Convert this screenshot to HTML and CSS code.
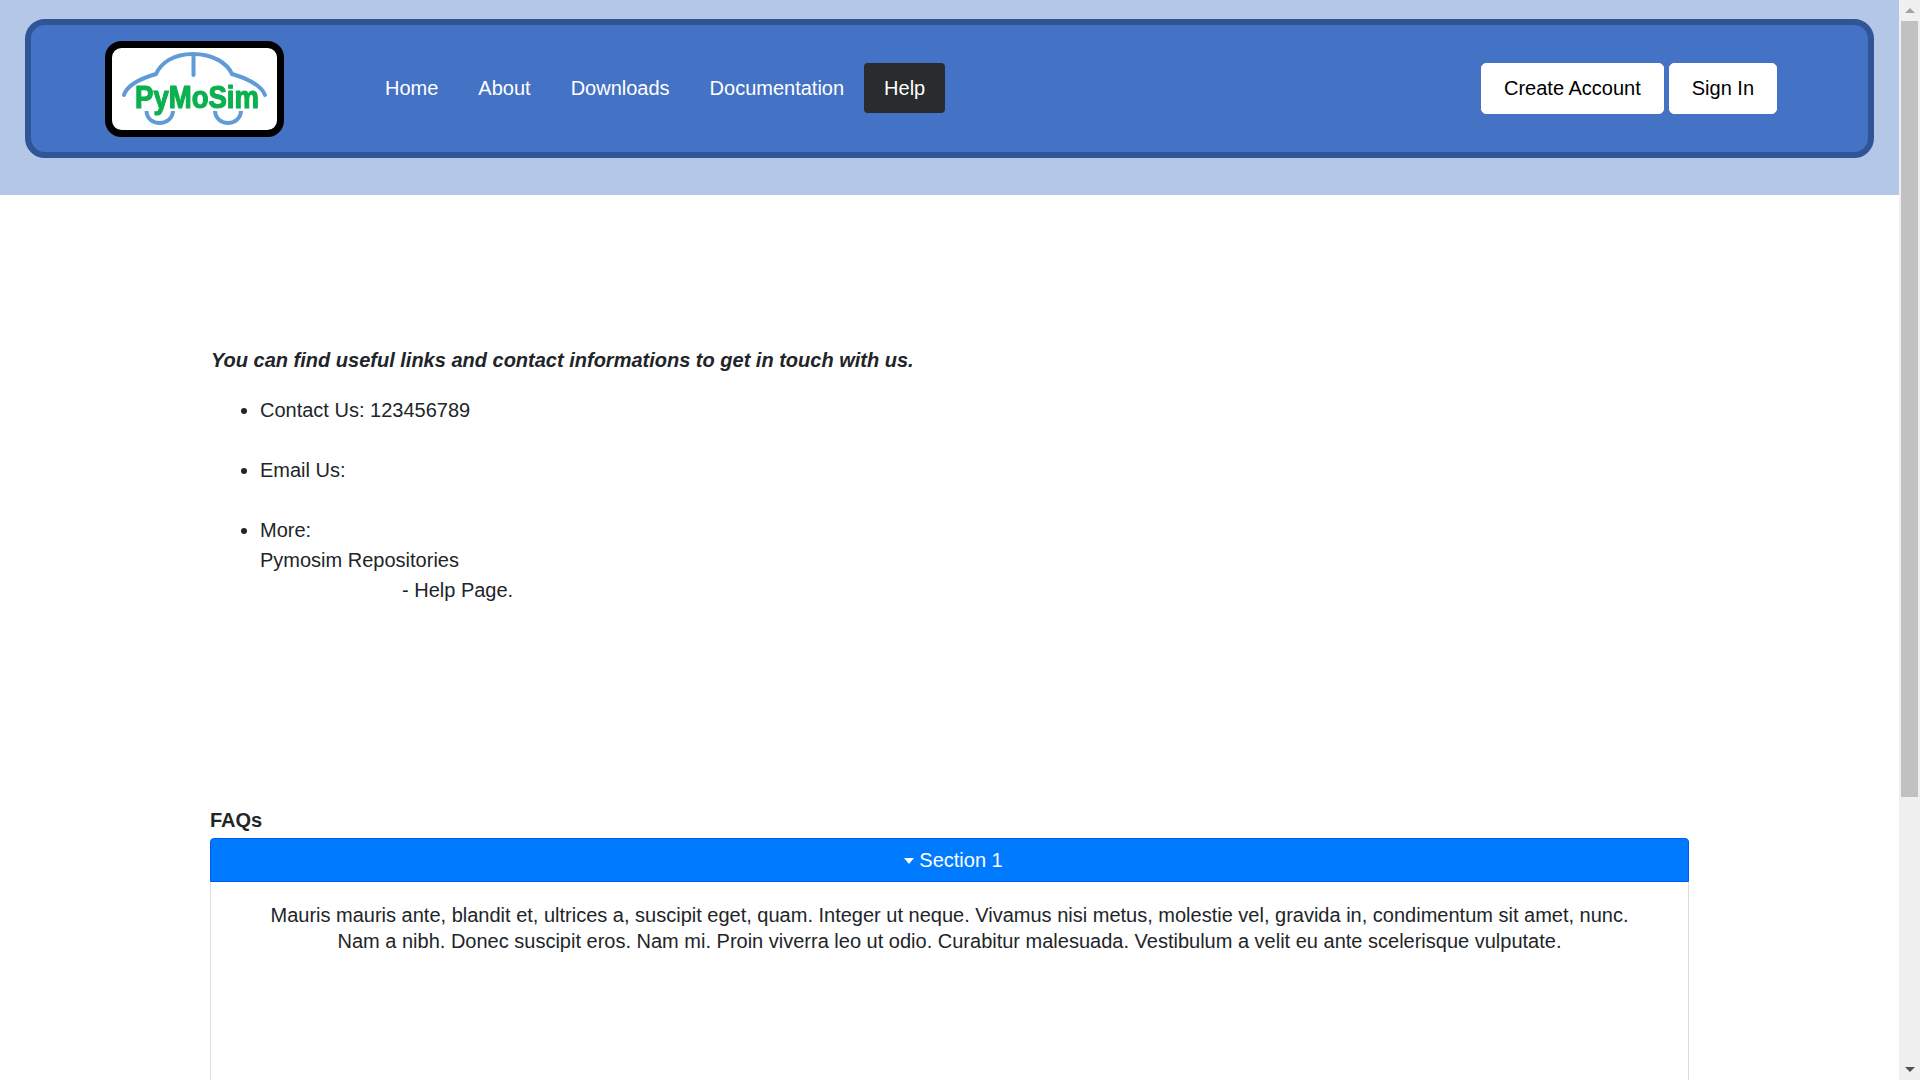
FILE: index.html
```html
<!DOCTYPE html>
<html lang="en">
<head>
<meta charset="utf-8">
<title>PyMoSim - Help</title>
<link rel="stylesheet" href="styles.css">
</head>
<body>
<div class="page">
  <header class="site-header">
    <div class="navbar">
      <a class="logo" href="#">
        <svg class="logo-svg" viewBox="0 0 179 96" width="179" height="96">
          <rect x="3.5" y="3.5" width="172" height="89" rx="13" fill="#fff" stroke="#000" stroke-width="7"/>
          <path d="M19 54 C22 44 34 38 51 33 C56 22 68 13 88 13 C108 13 122 22 127 33 C144 38 156 44 160 54" fill="none" stroke="#5f9bd6" stroke-width="4" stroke-linecap="round"/>
          <path d="M88.5 14 V34" fill="none" stroke="#5f9bd6" stroke-width="4" stroke-linecap="round"/>
          <path d="M41.5 70 C42 86 67 86 68 70 M110 70 C111 86 135 86 136 70" fill="none" stroke="#5f9bd6" stroke-width="4"/>
          <text class="logo-text" x="30" y="67" textLength="124" lengthAdjust="spacingAndGlyphs">PyMoSim</text>
        </svg>
      </a>
      <nav class="nav-links">
        <a class="nav-link" href="#">Home</a>
        <a class="nav-link" href="#">About</a>
        <a class="nav-link" href="#">Downloads</a>
        <a class="nav-link" href="#">Documentation</a>
        <a class="nav-link active" href="#">Help</a>
      </nav>
      <div class="auth">
        <a class="auth-btn" href="#">Create Account</a>
        <a class="auth-btn" href="#">Sign In</a>
      </div>
    </div>
  </header>
  <main class="content">
    <p class="intro">You can find useful links and contact informations to get in touch with us.</p>
    <ul class="contact-list">
      <li>Contact Us: 123456789<br><br></li>
      <li>Email Us:<br><br></li>
      <li>More:<br>Pymosim Repositories<br><span class="help-page">- Help Page.</span></li>
    </ul>
    <h2 class="faq-title">FAQs</h2>
    <section class="accordion">
      <button class="accordion-head" type="button"><span class="caret"></span>Section 1</button>
      <div class="accordion-body">
        <p>Mauris mauris ante, blandit et, ultrices a, suscipit eget, quam. Integer ut neque. Vivamus nisi metus, molestie vel, gravida in, condimentum sit amet, nunc.<br>Nam a nibh. Donec suscipit eros. Nam mi. Proin viverra leo ut odio. Curabitur malesuada. Vestibulum a velit eu ante scelerisque vulputate.</p>
      </div>
    </section>
  </main>
</div>
<aside class="scrollbar" aria-hidden="true">
  <div class="sb-btn"><span class="sb-up"></span></div>
  <div class="sb-thumb"></div>
  <div class="sb-rest"></div>
  <div class="sb-btn"><span class="sb-down"></span></div>
</aside>
</body>
</html>
```
FILE: styles.css
```css
* { box-sizing: border-box; }
html, body { margin: 0; height: 100%; }
body {
  display: flex;
  height: 100vh;
  overflow: hidden;
  background: #fff;
  color: #212529;
  font-family: "Liberation Sans", Arial, sans-serif;
  font-size: 20px;
  line-height: 30px;
}
a { text-decoration: none; color: inherit; }

.page { flex: 1; min-width: 0; height: 100%; overflow: hidden; }

.site-header { height: 195px; padding: 19px 25px 0; background: #b4c7e7; }
.navbar {
  display: flex;
  align-items: flex-start;
  height: 139px;
  padding: 16px 91px 0 74px;
  background: #4472c4;
  border: 6px solid #2f5597;
  border-radius: 20px;
}
.logo { display: block; flex: none; width: 179px; height: 96px; }
.logo-svg { display: block; filter: blur(0.4px); }
.logo-text {
  font-family: "Liberation Sans", sans-serif;
  font-size: 31px;
  font-weight: 700;
  fill: #0bb04f;
  stroke: #0bb04f;
  stroke-width: 1.2px;
  stroke-linejoin: round;
}
.nav-links { display: flex; margin: 22px 0 0 81px; }
.nav-link { padding: 10px 20px; color: #fff; border-radius: 4px; }
.nav-link.active { background: #292b2c; }
.auth { display: flex; gap: 5px; margin: 22px 0 0 auto; }
.auth-btn {
  padding: 9px 22px 10px;
  color: #000;
  background: #fff;
  border: 1px solid #fff;
  border-radius: 5px;
}

.content { padding: 150px 210px 0; }
.intro { margin: 0 0 20px 1px; font-weight: 700; font-style: italic; }
.contact-list { margin: 0 0 200px; padding-left: 50px; }
.help-page { margin-left: 142px; }
.faq-title { margin: 0 0 3px; font-size: 20px; line-height: 30px; font-weight: 700; }

.accordion-head {
  display: block;
  width: 100%;
  height: 44px;
  padding: 6px;
  color: #fff;
  background: #007bff;
  border: 1px solid #0058f5;
  border-radius: 4px 4px 0 0;
  font: inherit;
  text-align: center;
}
.caret {
  display: inline-block;
  margin: 0 5px 3px 8px;
  border-top: 6px solid #fff;
  border-left: 5px solid transparent;
  border-right: 5px solid transparent;
}
.accordion-body {
  height: 400px;
  padding: 20px;
  border: 1px solid #ddd;
  border-top: 0;
  text-align: center;
}
.accordion-body p { margin: 0; line-height: 26px; }

.scrollbar {
  display: flex;
  flex-direction: column;
  align-items: center;
  flex: none;
  width: 21px;
  height: 100%;
  background: #f0f0f0;
}
.sb-btn { display: flex; align-items: center; justify-content: center; flex: none; width: 100%; height: 21px; }
.sb-up, .sb-down { border-left: 5px solid transparent; border-right: 5px solid transparent; }
.sb-up { border-bottom: 5px solid #a3a3a3; }
.sb-down { border-top: 5px solid #505050; }
.sb-thumb { flex: none; width: 17px; height: 776px; background: #c1c1c1; }
.sb-rest { flex: 1; }
```
